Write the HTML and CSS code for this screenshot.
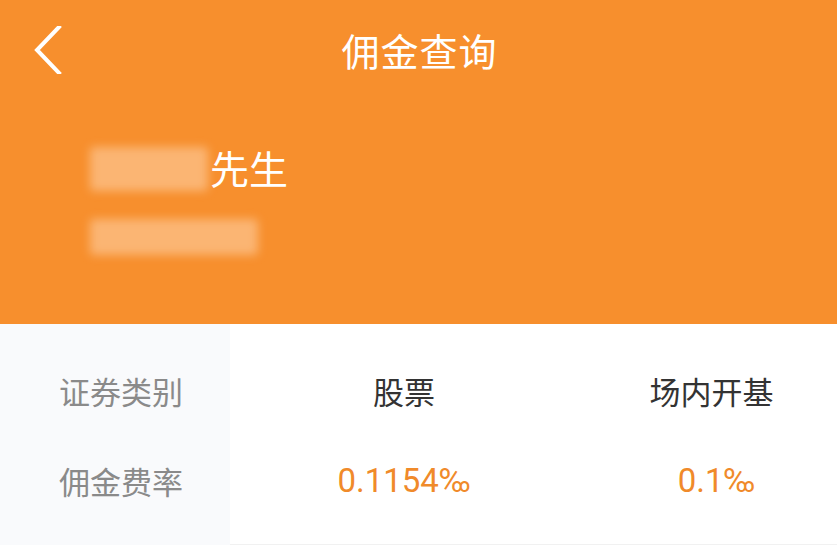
FILE: index.html
```html
<!DOCTYPE html>
<html lang="zh-CN">
<head>
<meta charset="utf-8">
<title>佣金查询</title>
<link rel="stylesheet" href="styles.css">
</head>
<body>
<div class="page">
  <header class="hero">
    <div class="nav">
      <span class="back">
        <svg width="30" height="48" viewBox="0 0 30 48"><polyline points="26,4 4,27 26,50" fill="none" stroke="#fff" stroke-width="4" stroke-linecap="square" transform="translate(0,-3)"/></svg>
      </span>
      <h1 class="title">佣金查询</h1>
    </div>
    <div class="user">
      <div class="name-row"><span class="blur blur-name"></span><span class="suffix">先生</span></div>
      <div class="blur blur-id"></div>
    </div>
  </header>
  <section class="table">
    <div class="col col-label">
      <div class="cell label">证券类别</div>
      <div class="cell label">佣金费率</div>
    </div>
    <div class="col col-a">
      <div class="cell head">股票</div>
      <div class="cell value">0.1154‰</div>
    </div>
    <div class="col col-b">
      <div class="cell head">场内开基</div>
      <div class="cell value">0.1‰</div>
    </div>
  </section>
</div>
</body>
</html>
```
FILE: styles.css
```css
* { box-sizing: border-box; }
html, body { margin: 0; padding: 0; }
body {
  width: 837px;
  height: 549px;
  overflow: hidden;
  background: #ffffff;
  font-family: "Noto Sans CJK SC", "Noto Sans", sans-serif;
}
.hero {
  height: 324px;
  background: #f78f2d;
  color: #fff;
}
.nav {
  height: 100px;
  display: flex;
  align-items: center;
  justify-content: center;
  position: relative;
}
.back {
  position: absolute;
  left: 33px;
  top: 26px;
  width: 30px;
  height: 48px;
}
.back svg { display: block; }
.title {
  margin: 0;
  font-size: 38px;
  font-weight: 400;
  letter-spacing: 1px;
  line-height: 1;
  padding-left: 2px;
}
.user {
  padding: 45px 0 0 90px;
  display: flex;
  flex-direction: column;
  gap: 26px;
}
.name-row {
  display: flex;
  align-items: center;
  height: 48px;
}
.suffix {
  font-size: 39px;
  line-height: 1;
  margin-left: 2px;
  margin-top: -3px;
}
.blur {
  display: block;
  background: rgba(255, 220, 185, 0.5);
  filter: blur(5px);
  border-radius: 4px;
}
.blur-name { width: 118px; height: 44px; }
.blur-id { width: 168px; height: 36px; }
.table {
  display: grid;
  grid-template-columns: 230px 348px 1fr;
  height: 221px;
  border-bottom: 1px solid #f1f1f1;
}
.col {
  padding: 21px 0 20px;
  display: flex;
  flex-direction: column;
}
.col-label { background: #f9fafc; }
.col-b { padding-right: 8px; }
.cell {
  height: 90px;
  display: flex;
  align-items: center;
  justify-content: center;
  font-size: 31px;
  line-height: 1;
}
.col-label .cell { justify-content: flex-start; padding-left: 59px; }
.label { color: #8a8a8a; }
.head { color: #333333; }
.value {
  color: #f08a2a;
  font-family: "Roboto", "Noto Sans", sans-serif;
  font-size: 33px;
}
.col-b .head { padding-left: 16px; }
.col-b .value { padding-left: 26px; }
```
